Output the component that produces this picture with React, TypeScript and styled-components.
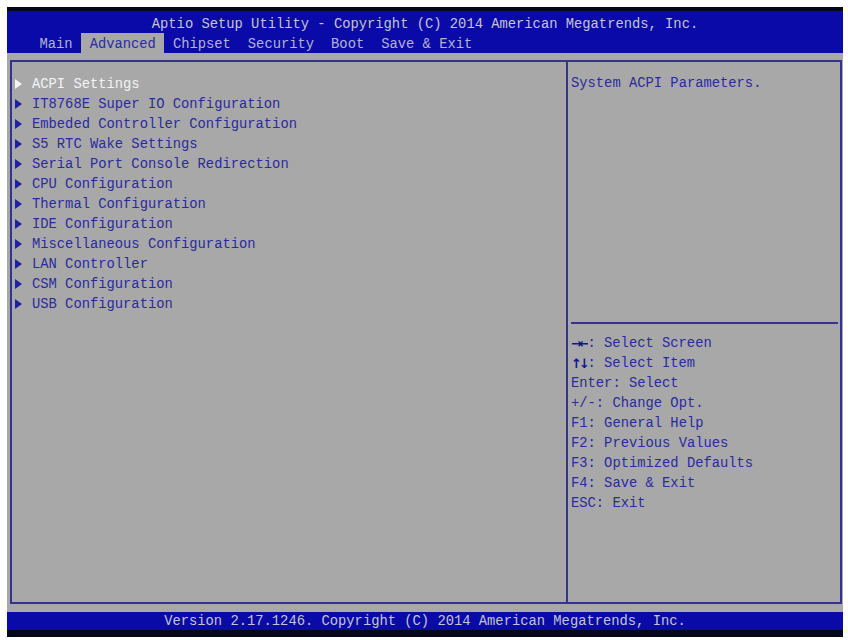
import styled, { createGlobalStyle } from 'styled-components';

const GlobalStyle = createGlobalStyle`
  html, body {
    margin: 0;
    padding: 0;
    background: #ffffff;
  }
  body {
    font-family: "Liberation Mono", "DejaVu Sans Mono", monospace;
  }
`;

const tabs = ['Main', 'Advanced', 'Chipset', 'Security', 'Boot', 'Save & Exit'];

const menu = [
  'ACPI Settings',
  'IT8768E Super IO Configuration',
  'Embeded Controller Configuration',
  'S5 RTC Wake Settings',
  'Serial Port Console Redirection',
  'CPU Configuration',
  'Thermal Configuration',
  'IDE Configuration',
  'Miscellaneous Configuration',
  'LAN Controller',
  'CSM Configuration',
  'USB Configuration',
];

const help: { key: string; text: string }[] = [
  { key: '→←', text: ': Select Screen' },
  { key: '↑↓', text: ': Select Item' },
  { key: '', text: 'Enter: Select' },
  { key: '', text: '+/-: Change Opt.' },
  { key: '', text: 'F1: General Help' },
  { key: '', text: 'F2: Previous Values' },
  { key: '', text: 'F3: Optimized Defaults' },
  { key: '', text: 'F4: Save & Exit' },
  { key: '', text: 'ESC: Exit' },
];

export default function App() {
  const selected = 0;
  return (
    <>
      <GlobalStyle />
      <Screen>
        <Header>
          <Title>Aptio Setup Utility - Copyright (C) 2014 American Megatrends, Inc.</Title>
          <TabRow>
            {tabs.map((t) => (
              <Tab key={t} $active={t === 'Advanced'}>
                {t}
              </Tab>
            ))}
          </TabRow>
        </Header>
        <Body>
          <Frame>
            <LeftPane>
              {menu.map((m, i) => (
                <MenuItem key={m} $selected={i === selected}>
                  <Arrow $selected={i === selected} />
                  {m}
                </MenuItem>
              ))}
            </LeftPane>
            <RightPane>
              <Description>System ACPI Parameters.</Description>
              <Separator />
              <HelpList>
                {help.map((h) => (
                  <HelpLine key={h.text}>
                    {h.key && <Key>{h.key}</Key>}
                    {h.text}
                  </HelpLine>
                ))}
              </HelpList>
            </RightPane>
          </Frame>
        </Body>
        <Footer>Version 2.17.1246. Copyright (C) 2014 American Megatrends, Inc.</Footer>
      </Screen>
    </>
  );
}

const Screen = styled.div`
  margin: 7px 0 0 7px;
  width: 836px;
  height: 630px;
  display: flex;
  flex-direction: column;
  background: #a8a8a8;
  font-size: 13.8px;
  letter-spacing: 0;
`;

const Header = styled.header`
  border-top: 4px solid #06061c;
  background: #0a0aa8;
  height: 42px;
  display: flex;
  flex-direction: column;
`;

const Title = styled.div`
  height: 22px;
  line-height: 22px;
  padding-top: 3px;
  box-sizing: border-box;
  text-align: center;
  color: #c4c4d2;
  white-space: pre;
`;

const TabRow = styled.div`
  display: flex;
  height: 20px;
  padding-left: 24px;
`;

const Tab = styled.div<{ $active?: boolean }>`
  padding: 0 8.5px;
  line-height: 23px;
  white-space: pre;
  color: ${(p) => (p.$active ? '#2a2aa8' : '#b4b4d0')};
  background: ${(p) => (p.$active ? '#a8a8a8' : 'transparent')};
`;

const Body = styled.main`
  padding: 7px 1px 8px 3px;
  height: 559px;
  box-sizing: border-box;
`;

const Frame = styled.div`
  height: 544px;
  box-sizing: border-box;
  border: 2px solid #34348e;
  display: flex;
`;

const LeftPane = styled.section`
  width: 551px;
  border-right: 2px solid #34348e;
  padding: 12px 0 0 3px;
  box-sizing: content-box;
  display: flex;
  flex-direction: column;
`;

const MenuItem = styled.div<{ $selected?: boolean }>`
  display: flex;
  align-items: center;
  height: 20px;
  white-space: pre;
  color: ${(p) => (p.$selected ? '#f4f4f4' : '#2a2aa0')};
`;

const Arrow = styled.span<{ $selected?: boolean }>`
  width: 0;
  height: 0;
  border-top: 5px solid transparent;
  border-bottom: 5px solid transparent;
  border-left: 7px solid ${(p) => (p.$selected ? '#f4f4f4' : '#2020a0')};
  margin-right: 10px;
`;

const RightPane = styled.aside`
  flex: 1;
  display: flex;
  flex-direction: column;
  padding-left: 3px;
`;

const Description = styled.div`
  height: 260px;
  box-sizing: border-box;
  padding-top: 12px;
  line-height: 20px;
  color: #2a2aa0;
`;

const Separator = styled.div`
  height: 2px;
  margin-right: 2px;
  background: #34348e;
`;

const HelpList = styled.div`
  padding-top: 10px;
  display: flex;
  flex-direction: column;
`;

const HelpLine = styled.div`
  height: 20px;
  line-height: 20px;
  white-space: pre;
  color: #2a2aa0;
`;

const Key = styled.span`
  display: inline-block;
  vertical-align: top;
  width: 16.5px;
  overflow: hidden;
  font-family: "DejaVu Sans", sans-serif;
  font-size: 13px;
  line-height: 19px;
  color: #14148c;
  font-weight: bold;
  letter-spacing: -3px;
`;

const Footer = styled.footer`
  height: 18px;
  line-height: 20px;
  background: #0a0aa8;
  border-bottom: 7px solid #06061c;
  text-align: center;
  color: #c4c4d2;
  white-space: pre;
`;
